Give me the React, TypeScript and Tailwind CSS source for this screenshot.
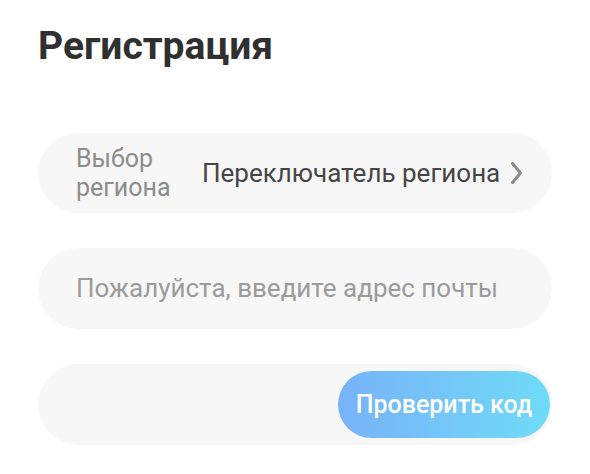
import React from "react";

export default function App() {
  return (
    <div className="w-[590px] h-[474px] bg-white px-[38px] pt-[22px] overflow-hidden" style={{ fontFamily: "Roboto, 'Noto Sans', sans-serif" }}>
      <h1 className="text-[39px] leading-[48px] font-bold text-[#303030]">Регистрация</h1>
      <div className="mt-[63px] flex flex-col gap-[35px]">
        <div className="h-[80px] rounded-full bg-[#f7f7f7] flex items-center pl-[38px] pr-[28px]">
          <div className="text-[25px] leading-[29px] text-[#8c8c8c] w-[126px] shrink-0">
            Выбор<br />региона
          </div>
          <div className="flex-1 text-[26px] text-[#454545] whitespace-nowrap">Переключатель региона</div>
          <svg width="15" height="24" viewBox="0 0 15 24" className="shrink-0">
            <path d="M3.5 2.5 L11.5 12 L3.5 21.5" fill="none" stroke="#8a8a8a" strokeWidth="3" strokeLinecap="round" strokeLinejoin="round" />
          </svg>
        </div>
        <div className="h-[81px] rounded-full bg-[#f7f7f7] flex items-center pl-[38px]">
          <span className="text-[26px] text-[#9b9b9b] whitespace-nowrap">Пожалуйста, введите адрес почты</span>
        </div>
        <div className="h-[81px] rounded-full bg-[#f7f7f7] flex items-center justify-end pr-[2px]">
          <button className="h-[67px] w-[212px] rounded-full bg-gradient-to-r from-[#77b2f8] to-[#6fdbf7] text-white text-[25px] font-medium">
            Проверить код
          </button>
        </div>
      </div>
    </div>
  );
}
